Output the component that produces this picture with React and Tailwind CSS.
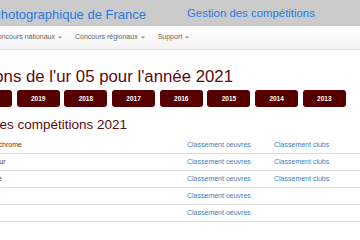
import React from 'react';

const years = ['2020', '2019', '2018', '2017', '2016', '2015', '2014', '2013'];

const rows = [
    { name: 'Monochrome', oeuvres: true, clubs: true },
    { name: 'Couleur', oeuvres: true, clubs: true },
    { name: 'Nature', oeuvres: true, clubs: true },
    { name: 'Vidéo', oeuvres: true, clubs: false },
    { name: 'Livre', oeuvres: true, clubs: false },
];

const Caret = () => (
    <svg width="4" height="3" viewBox="0 0 4 3" className="ml-[3px] shrink-0">
        <path d="M0 0.5 L4 0.5 L2 2.5 Z" fill="#888" />
    </svg>
);

const App = () => {
    return (
        <div className="w-[360px] h-[240px] overflow-hidden bg-white font-['Liberation_Sans',Arial,sans-serif]">
            {/* bandeau */}
            <div className="h-[26px] bg-[#cbcbcb] flex items-center whitespace-nowrap text-[#2779e6]">
                <div className="w-[146px] shrink-0 flex justify-end">
                    <span className="text-[13px] leading-none pt-[2px]">Fédération Photographique de France</span>
                </div>
                <span className="ml-[41px] text-[11.4px] leading-none pt-[2px]">Gestion des compétitions</span>
            </div>

            {/* navbar */}
            <div className="h-[24px] bg-gradient-to-b from-white to-[#f4f4f4] border-b border-[#e3e3e3] flex items-center whitespace-nowrap text-[7px] text-[#666]">
                <div className="w-[62px] shrink-0 flex justify-end items-center">
                    <span>Concours nationaux</span>
                    <Caret />
                </div>
                <div className="ml-[13px] flex items-center">
                    <span>Concours régionaux</span>
                    <Caret />
                </div>
                <div className="ml-[13px] flex items-center">
                    <span>Support</span>
                    <Caret />
                </div>
            </div>

            {/* titre */}
            <div className="mt-[17px] h-[20px] w-[233px] flex justify-end items-center whitespace-nowrap">
                <h1 className="text-[16.8px] leading-none text-[#5e0a0a]">Compétitions de l'ur 05 pour l'année 2021</h1>
            </div>

            {/* années */}
            <div className="mt-[3px] ml-[-31px] flex gap-[4.7px]">
                {years.map((y) => (
                    <button
                        key={y}
                        className="w-[43px] h-[17px] shrink-0 rounded-[3px] bg-[#560000] text-white text-[6.5px] font-bold flex items-center justify-center"
                    >
                        {y}
                    </button>
                ))}
            </div>

            {/* liste */}
            <div className="mt-[9px] h-[18px] w-[127px] flex justify-end items-center whitespace-nowrap">
                <h2 className="text-[13.5px] leading-none text-[#5e0a0a]">Liste des compétitions 2021</h2>
            </div>

            <div className="mt-[3px] ml-[-19px] text-[7px] whitespace-nowrap">
                {rows.map((r) => (
                    <div key={r.name} className="h-[17px] border-b border-[#dddddd] grid grid-cols-[206px_87px_1fr] items-center">
                        <span className="text-[#6e1f1f]">{r.name}</span>
                        <span className="text-[#3a7fc1]">{r.oeuvres ? 'Classement oeuvres' : ''}</span>
                        <span className="text-[#3a7fc1]">{r.clubs ? 'Classement clubs' : ''}</span>
                    </div>
                ))}
            </div>
        </div>
    );
};

export default App;
